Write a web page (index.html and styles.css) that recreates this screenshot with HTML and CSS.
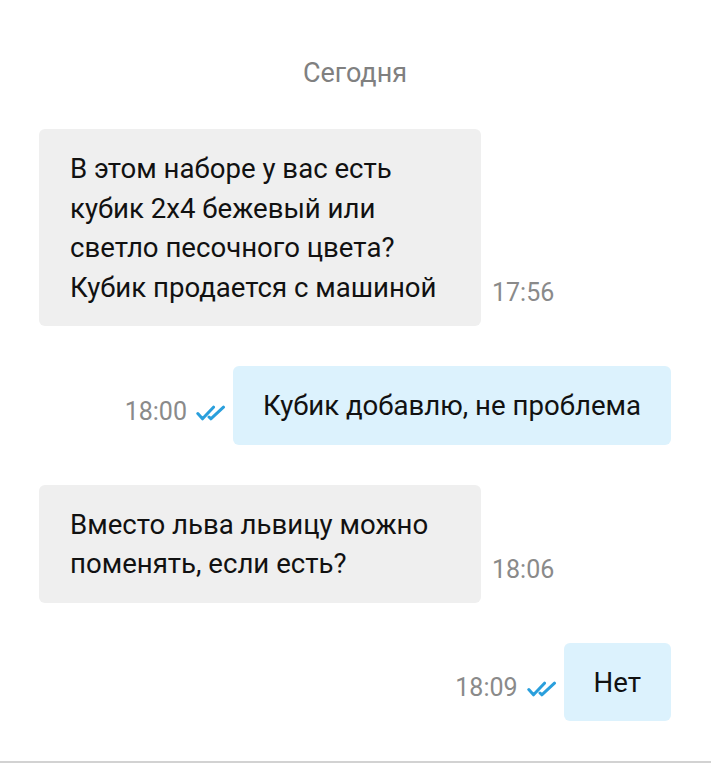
FILE: index.html
```html
<!DOCTYPE html>
<html lang="ru">
<head>
<meta charset="utf-8">
<link rel="stylesheet" href="styles.css">
</head>
<body>
<div class="chat">
  <div class="day">Сегодня</div>

  <div class="row in">
    <div class="bubble">В этом наборе у вас есть кубик 2х4 бежевый или светло песочного цвета? Кубик продается с машиной</div>
    <div class="meta"><span class="time">17:56</span></div>
  </div>

  <div class="row out">
    <div class="meta"><span class="time">18:00</span>
      <svg class="ticks" viewBox="0 0 30 16" width="30" height="16"><path d="M1.8 8.5 L6.5 13.8 L17.5 2.2 M13 12 L14.8 13.8 L27.5 2.2" fill="none" stroke="#2a9fdc" stroke-width="3" stroke-linecap="round" stroke-linejoin="round"/></svg>
    </div>
    <div class="bubble">Кубик добавлю, не проблема</div>
  </div>

  <div class="row in">
    <div class="bubble">Вместо льва львицу можно поменять, если есть?</div>
    <div class="meta"><span class="time">18:06</span></div>
  </div>

  <div class="row out">
    <div class="meta"><span class="time">18:09</span>
      <svg class="ticks" viewBox="0 0 30 16" width="30" height="16"><path d="M1.8 8.5 L6.5 13.8 L17.5 2.2 M13 12 L14.8 13.8 L27.5 2.2" fill="none" stroke="#2a9fdc" stroke-width="3" stroke-linecap="round" stroke-linejoin="round"/></svg>
    </div>
    <div class="bubble">Нет</div>
  </div>
</div>
<div class="bottom-line"></div>
</body>
</html>
```
FILE: styles.css
```css
html, body {
  margin: 0;
  padding: 0;
  background: #ffffff;
}
body {
  font-family: Roboto, "Noto Sans", sans-serif;
  color: #111111;
  width: 711px;
  height: 770px;
  overflow: hidden;
  display: flex;
  flex-direction: column;
}
.chat {
  flex: 1;
  display: flex;
  flex-direction: column;
  gap: 40px;
  padding: 55px 40px 0 39px;
}
.day {
  text-align: center;
  font-size: 27px;
  line-height: 36px;
  color: #808080;
  margin-bottom: -2px;
}
.row {
  display: flex;
  align-items: flex-end;
}
.row.out {
  justify-content: flex-end;
}
.bubble {
  font-size: 27.6px;
  line-height: 39.5px;
  padding: 20px 30px 19px 31px;
  border-radius: 6px;
  box-sizing: border-box;
}
.in .bubble {
  background: #efefef;
  max-width: 442px;
}
.out .bubble {
  background: #dcf2fd;
  padding-left: 30px;
}
.meta {
  display: flex;
  align-items: center;
  gap: 9px;
  padding-bottom: 19px;
  height: 28px;
}
.in .meta {
  margin-left: 11px;
}
.out .meta {
  margin-right: 7px;
}
.time {
  font-size: 25px;
  color: #8a8a8a;
  line-height: 28px;
}
.ticks {
  display: block;
  margin-top: 2px;
}
.bottom-line {
  height: 2px;
  background: #d2d2d2;
  margin-bottom: 7px;
}
```
